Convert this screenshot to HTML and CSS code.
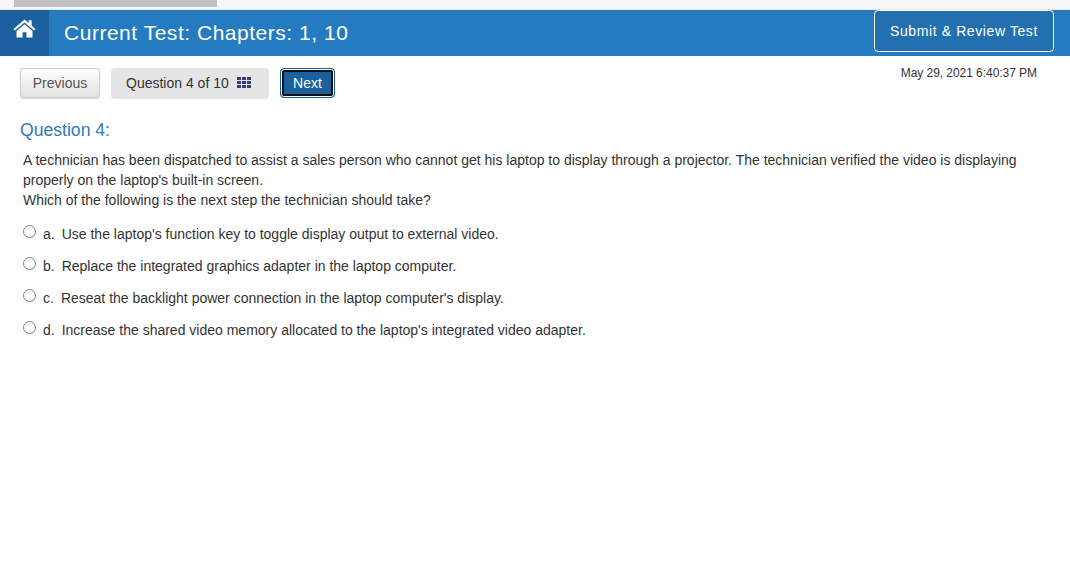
FILE: index.html
```html
<!DOCTYPE html>
<html lang="en">
<head>
    <meta charset="UTF-8">
    <title>Current Test</title>
    <link rel="stylesheet" href="styles.css">
</head>
<body>
    <div class="top-strip">
        <div class="scroll-thumb"></div>
    </div>

    <header class="test-header">
        <a href="#" class="home-link">
            <svg class="home-icon" viewBox="0 0 24 20" width="23" height="19">
                <path fill="#fff" d="M12 0.6 L0.4 10.4 L1.9 12.2 L12 3.7 L22.1 12.2 L23.6 10.4 L19.6 7 L19.6 1.4 L16.4 1.4 L16.4 4.3 Z"/>
                <path fill="#fff" d="M12 5.5 L3.6 12.6 L3.6 19.6 L10 19.6 L10 14 L14 14 L14 19.6 L20.4 19.6 L20.4 12.6 Z"/>
            </svg>
        </a>
        <h1 class="test-title">Current Test: Chapters: 1, 10</h1>
        <a href="#" class="submit-btn">Submit &amp; Review Test</a>
    </header>

    <div class="toolbar">
        <div class="nav-buttons">
            <button class="btn-prev">Previous</button>
            <div class="question-count">
                <span>Question 4 of 10</span>
                <svg class="grid-icon" viewBox="0 0 14 11" width="14" height="11">
                    <path fill="#3b3a80" d="M0 0h4v3H0zM5 0h4v3H5zM10 0h4v3h-4zM0 4h4v3H0zM5 4h4v3H5zM10 4h4v3h-4zM0 8h4v3H0zM5 8h4v3H5zM10 8h4v3h-4z"/>
                </svg>
            </div>
            <button class="btn-next">Next</button>
        </div>
        <div class="timestamp">May 29, 2021 6:40:37 PM</div>
    </div>

    <main class="question">
        <h2 class="question-title">Question 4:</h2>
        <p class="question-text">A technician has been dispatched to assist a sales person who cannot get his laptop to display through a projector. The technician verified the video is displaying properly on the laptop's built-in screen.<br>Which of the following is the next step the technician should take?</p>

        <label class="answer"><input type="radio" name="answer"><span class="letter">a.</span><span>Use the laptop's function key to toggle display output to external video.</span></label>
        <label class="answer"><input type="radio" name="answer"><span class="letter">b.</span><span>Replace the integrated graphics adapter in the laptop computer.</span></label>
        <label class="answer"><input type="radio" name="answer"><span class="letter">c.</span><span>Reseat the backlight power connection in the laptop computer's display.</span></label>
        <label class="answer"><input type="radio" name="answer"><span class="letter">d.</span><span>Increase the shared video memory allocated to the laptop's integrated video adapter.</span></label>
    </main>
</body>
</html>
```

FILE: styles.css
```css
* {
    box-sizing: border-box;
}

body {
    margin: 0;
    background-color: #fff;
    color: #333;
    font-family: 'Liberation Sans', Arial, sans-serif;
    font-size: 14px;
    line-height: 20px;
}

.top-strip {
    height: 10px;
    padding-left: 14px;
    background-color: #f6f6f6;
    border-bottom: 1px solid #e4e4e4;
}

.scroll-thumb {
    width: 203px;
    height: 7px;
    background-color: #c1c1c1;
}

.test-header {
    display: flex;
    align-items: flex-start;
    height: 46px;
    background-color: #247bc0;
}

.home-link {
    display: flex;
    justify-content: center;
    width: 49px;
    height: 46px;
    padding-top: 9px;
    background-color: #1b5f9e;
}

.test-title {
    flex: 1;
    margin: 0;
    padding: 10px 0 0 15px;
    color: #fff;
    font-size: 21px;
    font-weight: normal;
    line-height: 26px;
    letter-spacing: 0.52px;
}

.submit-btn {
    width: 180px;
    height: 42px;
    margin-right: 16px;
    border: 1px solid #fff;
    border-radius: 4px;
    background-color: #2370b1;
    color: #fff;
    font-size: 14px;
    line-height: 40px;
    text-align: center;
    text-decoration: none;
    letter-spacing: 0.6px;
}

.toolbar {
    display: flex;
    justify-content: space-between;
    padding: 12px 33px 0 20px;
}

.nav-buttons {
    display: flex;
    align-items: flex-start;
    gap: 11px;
}

.btn-prev {
    width: 80px;
    height: 30px;
    border: 1px solid #ccc;
    border-radius: 3px;
    background: linear-gradient(#fff, #e2e2e2);
    box-shadow: 0 1px 1px rgba(0, 0, 0, 0.15);
    color: #555;
    font-family: inherit;
    font-size: 14px;
}

.question-count {
    display: flex;
    align-items: center;
    gap: 8px;
    width: 158px;
    height: 31px;
    padding: 0 0 2px 15px;
    border-radius: 4px;
    background-color: #e5e5e5;
}

.btn-next {
    width: 55px;
    height: 30px;
    border: 1px solid #1b5f9e;
    border-radius: 4px;
    background-color: #1b5f9e;
    box-shadow: inset 0 0 0 1px #fff, inset 0 0 0 3px #111;
    color: #fff;
    font-family: inherit;
    font-size: 14px;
}

.timestamp {
    font-size: 12px;
    line-height: 10px;
    letter-spacing: -0.05px;
}

.question {
    padding: 0 20px;
}

.question-title {
    margin: 19px 0 0;
    color: #337ab7;
    font-size: 17.6px;
    font-weight: normal;
    line-height: 24px;
}

.question-text {
    margin: 8px 0 0;
    padding-left: 3px;
}

.answer {
    display: flex;
    align-items: flex-start;
    height: 32px;
    padding-left: 3px;
}

.question-text + .answer {
    margin-top: 14px;
}

.answer input {
    appearance: none;
    width: 13px;
    height: 13px;
    margin: 1px 7px 0 0;
    border: 1px solid #808080;
    border-radius: 50%;
    background-color: #fff;
}

.letter {
    margin-right: 7px;
}
```
